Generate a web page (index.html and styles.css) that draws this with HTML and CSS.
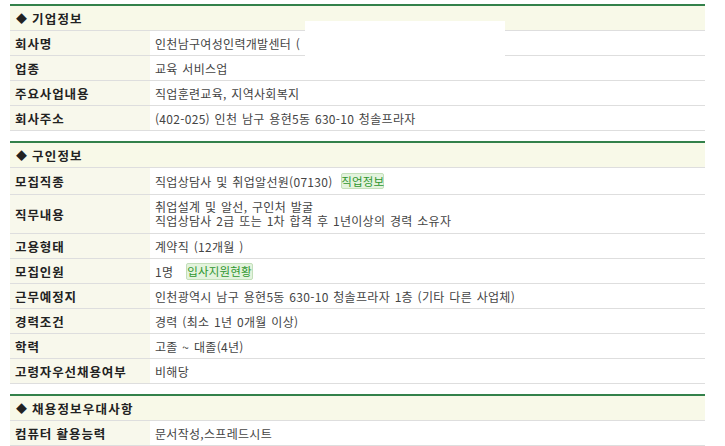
FILE: index.html
```html
<!DOCTYPE html>
<html lang="ko">
<head>
<meta charset="utf-8">
<link rel="stylesheet" href="styles.css">
</head>
<body>
<div class="page">
  <section class="sec">
    <div class="sec-head"><span class="dia">◆</span>기업정보</div>
    <div class="row"><div class="lbl">회사명</div><div class="val">인천남구여성인력개발센터 (</div></div>
    <div class="row"><div class="lbl">업종</div><div class="val">교육 서비스업</div></div>
    <div class="row"><div class="lbl">주요사업내용</div><div class="val">직업훈련교육, 지역사회복지</div></div>
    <div class="row"><div class="lbl">회사주소</div><div class="val">(402-025) 인천 남구 용현5동 630-10 청솔프라자</div></div>
    <div class="mask"></div>
  </section>

  <section class="sec">
    <div class="sec-head"><span class="dia">◆</span>구인정보</div>
    <div class="row r26"><div class="lbl">모집직종</div><div class="val">직업상담사 및 취업알선원(07130) <span class="badge b1">직업정보</span></div></div>
    <div class="row r38"><div class="lbl">직무내용</div><div class="val multi"><span>취업설계 및 알선, 구인처 발굴</span><span>직업상담사 2급 또는 1차 합격 후 1년이상의 경력 소유자</span></div></div>
    <div class="row"><div class="lbl">고용형태</div><div class="val">계약직 (12개월 )</div></div>
    <div class="row"><div class="lbl">모집인원</div><div class="val">1명 <span class="badge b2">입사지원현황</span></div></div>
    <div class="row"><div class="lbl">근무예정지</div><div class="val">인천광역시 남구 용현5동 630-10 청솔프라자 1층 (기타 다른 사업체)</div></div>
    <div class="row"><div class="lbl">경력조건</div><div class="val">경력 (최소 1년 0개월 이상)</div></div>
    <div class="row"><div class="lbl">학력</div><div class="val">고졸 ~ 대졸(4년)</div></div>
    <div class="row"><div class="lbl">고령자우선채용여부</div><div class="val">비해당</div></div>
  </section>

  <section class="sec">
    <div class="sec-head"><span class="dia">◆</span>채용정보우대사항</div>
    <div class="row"><div class="lbl">컴퓨터 활용능력</div><div class="val">문서작성,스프레드시트</div></div>
  </section>
</div>
</body>
</html>
```

FILE: styles.css
```css
* { box-sizing: border-box; }
html, body { margin: 0; padding: 0; background: #fff; }
body {
  font-family: "Noto Sans CJK KR", "Noto Sans", sans-serif;
  font-size: 12px;
  color: #444;
}
.page {
  width: 705px;
  padding: 4px 0 0 10px;
}
.sec {
  position: relative;
  border-top: 2px solid #33814a;
  border-bottom: 1px solid #dedede;
  margin-bottom: 10px;
}
.sec-head {
  height: 24px;
  background: #f8f9e8;
  display: flex;
  align-items: center;
  padding-left: 6px;
  font-weight: bold;
  font-size: 12.5px;
  color: #222;
  letter-spacing: 1.2px;
}
.dia { font-size: 11px; margin-right: 5px; letter-spacing: 0; }
.row {
  display: grid;
  grid-template-columns: 140px 1fr;
  border-top: 1px solid #dedede;
  height: 25px;
}
.row.r26 { height: 27px; }
.row.r38 { height: 39px; }
.lbl {
  background: #f8f8ec;
  display: flex;
  align-items: center;
  padding-left: 5px;
  font-weight: bold;
  font-size: 12.5px;
  color: #222;
  letter-spacing: 0.9px;
}
.val {
  display: flex;
  align-items: center;
  padding-left: 5px;
  white-space: pre;
  color: #444;
  letter-spacing: 0.3px;
  word-spacing: 1px;
}
.val.multi {
  flex-direction: column;
  align-items: flex-start;
  justify-content: center;
  line-height: 14px;
}
.badge {
  display: inline-flex;
  align-items: center;
  justify-content: center;
  background: #e3f3dd;
  border: 1px solid #c3dfba;
  color: #2f962f;
  border-radius: 2px;
  margin-left: 4px;
  line-height: 12px;
  padding-bottom: 1px;
  letter-spacing: 0.2px;
}
.b1 { width: 43px; height: 16px; font-size: 11.5px; }
.b2 { width: 67px; height: 17px; font-size: 11.5px; margin-left: 8px; }
.mask {
  position: absolute;
  left: 295px;
  top: 15px;
  width: 200px;
  height: 36px;
  background: #fff;
}
```
